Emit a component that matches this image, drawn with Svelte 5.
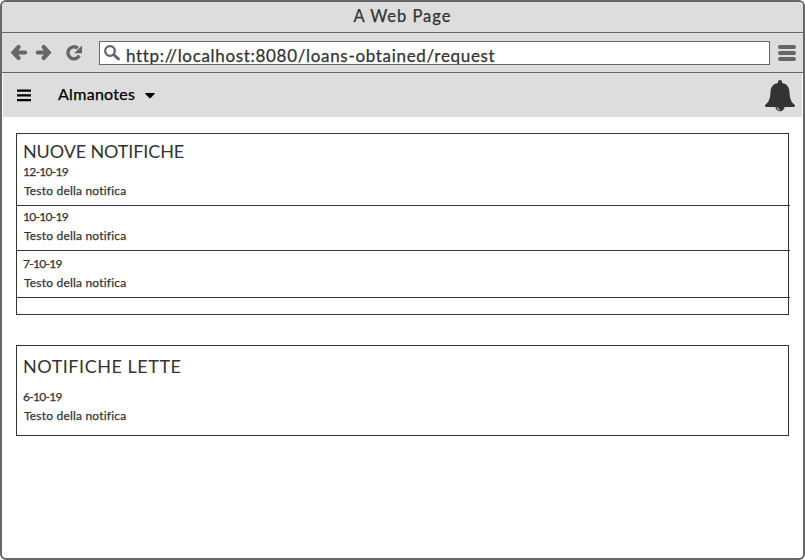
<script>
  const fresh = [
    { date: '12-10-19', text: 'Testo della notifica' },
    { date: '10-10-19', text: 'Testo della notifica' },
    { date: '7-10-19', text: 'Testo della notifica' }
  ];
  const read = [{ date: '6-10-19', text: 'Testo della notifica' }];
</script>

<div class="window">
  <header class="title"><span>A Web Page</span></header>
  <div class="toolbar">
    <svg class="nav-icons" width="76" height="18" viewBox="0 0 76 18">
      <g fill="none" stroke="#666" stroke-width="4">
        <path d="M8.600 3 3.500 8.500l5.100 5.500M4 8.500h11.200M33.600 3l5.100 5.500-5.100 5.500M38.200 8.500H27.800" stroke-width="4.200" stroke-linecap="round" stroke-linejoin="miter" />
        <path d="M69.300 11.500A6 6 0 1 1 67.800 4.200" stroke-width="3.400" />
      </g>
      <path fill="#666" d="M72 1.500v7.700h-7.800z" />
    </svg>
    <div class="address">
      <svg width="18" height="18" viewBox="0 0 18 18" fill="none" stroke="#666">
        <circle cx="6" cy="6" r="4.800" stroke-width="2.300" />
        <path d="m10 10 4.400 3.900" stroke-width="3" stroke-linecap="round" />
      </svg>
      <span>http://localhost:8080/loans-obtained/request</span>
    </div>
    <div class="menu"><i></i><i></i><i></i></div>
  </div>
  <nav>
    <svg class="burger" width="14" height="13" viewBox="0 0 14 13"><path d="M0 .5h14v2.300H0zM0 5.200h14v2.400H0zM0 10h14v2.300H0z" /></svg>
    <span class="brand">Almanotes</span>
    <svg class="caret" width="10" height="6" viewBox="0 0 10 6"><path d="M.8 0h8.400q1 .2.3 1L5.700 4.900q-.7.600-1.400 0L.5 1Q-.2.200.8 0z" /></svg>
    <svg class="bell" width="30" height="33" viewBox="0 0 30 33">
      <path fill="#333" d="M13 3V1.800Q13 0 15 0t2 1.800V3c5 .8 7.300 4.400 7.500 9 .2 6 1.200 9.500 4.600 12.300 1.400 1.200.9 2.700-.8 2.700H1.700C0 27-.5 25.500.9 24.300 4.300 21.500 5.300 18 5.500 12 5.700 7.400 8 3.800 13 3z" />
      <path fill="#333" d="M10.300 26h9.400a4.700 5.200 0 0 1-9.400 0z" />
      <path d="M12.300 27.300q.2 2.300 2.500 2.700" fill="none" stroke="#ddd" stroke-width="1" />
    </svg>
  </nav>
  <main>
    <section class="new">
      <h2>NUOVE NOTIFICHE</h2>
      {#each fresh as item}
        <article><time>{item.date}</time><p>{item.text}</p></article>
      {/each}
    </section>
    <section class="read">
      <h2>NOTIFICHE LETTE</h2>
      {#each read as item}
        <article><time>{item.date}</time><p>{item.text}</p></article>
      {/each}
    </section>
  </main>
</div>

<style>
  :global(body) { margin: 0; background: #fff; }
  .window {
    box-sizing: border-box; width: 805px; height: 560px; overflow: hidden;
    border: 2px solid #666; border-radius: 6px; background: #fff;
    font-family: Lato, "Open Sans", sans-serif; color: #333;
    font-variant-ligatures: none;
    -webkit-text-stroke: 0.25px currentColor;
  }
  .title {
    box-sizing: border-box; height: 31px; border-bottom: 1px solid #666; background: #ddd;
    text-align: center; font-size: 16.5px; line-height: 28px; letter-spacing: 1px;
  }
  .toolbar {
    box-sizing: border-box; height: 40px; border-bottom: 1px solid #666; background: #ddd;
    display: flex; align-items: flex-start; padding: 8px 7px 0 8px;
  }
  .nav-icons { margin-top: 3px; flex: none; }
  .address {
    box-sizing: border-box; width: 671px; height: 24px; margin-left: 13px; border: 1px solid #666;
    background: #fff; display: flex; overflow: hidden;
  }
  .address svg { margin: 3px 0 0 4px; flex: none; }
  .address span { margin-left: 4px; font-size: 17px; line-height: 28px; letter-spacing: 0.68px; white-space: nowrap; }
  .menu { margin: 4px 0 0 8px; display: flex; flex-direction: column; gap: 2px; }
  .menu i { width: 18px; height: 4px; border-radius: 2px; background: #666; }
  nav { height: 44px; margin: 0 1px; background: #ddd; display: flex; color: #000; }
  .burger { margin: 16px 0 0 14px; }
  .brand { width: 87px; margin-left: 27px; font-size: 16px; line-height: 41px; letter-spacing: 0.3px; }
  .caret { margin-top: 20px; }
  .bell { margin: 7px 7px 0 auto; }
  main { padding: 16px 14px 0; }
  section { box-sizing: border-box; width: 773px; border: 1px solid #333; }
  h2 { margin: 0; padding-left: 6px; font-weight: 400; font-size: 18px; line-height: 22px; -webkit-text-stroke: 0; }
  article { box-sizing: border-box; width: 773px; padding-left: 7px; font-size: 12px; line-height: 19px; letter-spacing: 0.2px; }
  time { display: block; margin-left: -1px; letter-spacing: -0.7px; }
  p { margin: 0; }
  .new { height: 182px; }
  .new h2 { padding-top: 6px; letter-spacing: -0.12px; }
  .new article { height: 45px; padding-top: 1px; border-bottom: 1px solid #333; }
  .new article:nth-of-type(1) { height: 44px; padding-top: 0; }
  .new article:nth-of-type(3) { height: 47px; padding-top: 3px; }
  .read { height: 91px; margin-top: 30px; }
  .read h2 { padding-top: 9px; letter-spacing: 0.53px; }
  .read article { padding-top: 10px; }
</style>
